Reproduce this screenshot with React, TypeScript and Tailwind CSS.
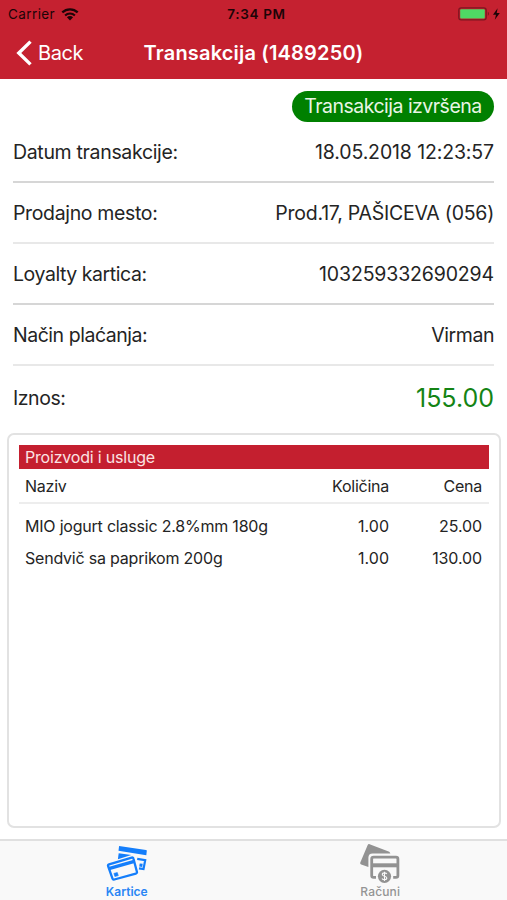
import type { ReactNode } from "react";

type Detail = {
  label: string;
  value: string;
  labelClass: string;
  valueClass: string;
  lineClass: string;
};

type Product = {
  name: string;
  quantity: string;
  price: string;
};

const details: Detail[] = [
  {
    label: "Datum transakcije:",
    value: "18.05.2018 12:23:57",
    labelClass: "tracking-[-0.33px]",
    valueClass: "tracking-[-0.13px]",
    lineClass: "border-[#d6d6d6]",
  },
  {
    label: "Prodajno mesto:",
    value: "Prod.17, PAŠICEVA (056)",
    labelClass: "tracking-[-0.35px]",
    valueClass: "tracking-[-0.25px]",
    lineClass: "border-[#e8e8e8]",
  },
  {
    label: "Loyalty kartica:",
    value: "103259332690294",
    labelClass: "tracking-[-0.44px]",
    valueClass: "tracking-[-0.15px]",
    lineClass: "border-[#d6d6d6]",
  },
  {
    label: "Način plaćanja:",
    value: "Virman",
    labelClass: "tracking-[-0.47px]",
    valueClass: "tracking-[-0.45px]",
    lineClass: "border-[#e8e8e8]",
  },
];

const products: Product[] = [
  { name: "MIO jogurt classic 2.8%mm 180g", quantity: "1.00", price: "25.00" },
  { name: "Sendvič sa paprikom 200g", quantity: "1.00", price: "130.00" },
];

const WifiIcon = () => (
  <svg width="18" height="13" viewBox="0 0 18 13" fill="none" stroke="#1c0407">
    <path d="M1.3 4.4a11.2 11.2 0 0 1 15.4 0" strokeWidth="2.3" />
    <path d="M4.1 7.4a7.2 7.2 0 0 1 9.8 0" strokeWidth="2.1" />
    <path d="M9 12.6 5.9 9.3a4.6 4.6 0 0 1 6.2 0z" fill="#1c0407" stroke="none" />
  </svg>
);

const BatteryIcon = () => (
  <svg width="44" height="14" viewBox="0 0 44 14">
    <rect x="0.8" y="0.8" width="27.4" height="12" rx="2.4" fill="none" stroke="#7d1620" strokeWidth="1.3" />
    <rect x="2.2" y="2.2" width="24.6" height="9.2" rx="1" fill="#4fd964" />
    <path d="M29.8 4.8c1.6.5 1.6 3.5 0 4z" fill="#7d1620" />
    <path d="M39.6 1.2 35 7.7h3l-1.2 5.1 5-6.9h-3.1z" fill="#1c0407" />
  </svg>
);

const CardsIcon = () => (
  <svg width="42" height="38" viewBox="0 0 42 38" fill="none" stroke="#147efb">
    <path d="m13.1 1 26.9 4.1c.6.1.9.5.8 1l-.5 4.2-27.8-4.6z" fill="#147efb" stroke="none" />
    <path d="m12.7 8.2 12.6 1.8-13.4 4.2z" fill="#147efb" stroke="none" />
    <path d="m31.2 13.8 8 1.3-1.7 9-4.5-.7" strokeWidth="2.2" />
    <path d="m33.7 18.4 3 .4-.5 3.1-3-.4z" fill="#147efb" stroke="none" />
    <path d="m3.1 19.4 22.6-6.8c1-.3 1.6.1 1.8 1.1l3.4 13c.3 1-.1 1.6-1.1 1.9L8.3 34.5c-1 .3-1.6-.1-1.9-1.1L2.1 21.1c-.3-.9.1-1.4 1-1.7z" strokeWidth="2.3" />
    <path d="m2.8 23.6 25.5-7.2" strokeWidth="3.4" />
    <path d="m7.9 28.4 3.4-.9 1 3.1-3.4.9z" fill="#147efb" strokeWidth="0.6" />
  </svg>
);

const BillsIcon = () => (
  <svg width="42" height="40" viewBox="0 0 42 40" fill="none" stroke="#929292">
    <path d="m10.6.2 19 7.2c.9.3 1.5 1.1 1.8 2.1H13.6c-2.8 0-4.2 1.5-4.2 4.2V23l-7.2-2.6c-.9-.3-1.2-.9-.9-1.8L8.7 1c.4-.9 1-1.2 1.9-.8z" fill="#929292" stroke="none" />
    <path d="M17 33.4h-2.4c-1.2 0-1.9-.7-1.9-1.9V15c0-1.2.7-1.9 1.9-1.9h22.4c1.2 0 1.9.7 1.9 1.9v16.5c0 1.2-.7 1.9-1.9 1.9h-2.8" strokeWidth="2.8" />
    <path d="M12.7 21.3h26" strokeWidth="4" />
    <circle cx="25.5" cy="32.3" r="6.6" fill="#929292" stroke="none" />
    <path d="M27.8 30c-.5-.8-1.3-1.1-2.3-1.1-1.3 0-2.2.6-2.2 1.6 0 2.3 4.5 1.1 4.5 3.5 0 1-.9 1.7-2.3 1.7-1.1 0-2-.4-2.5-1.3M25.5 27.7v9.2" stroke="#f9f9f9" strokeWidth="1.1" />
  </svg>
);

const Tab = ({ label, className, children }: { label: string; className: string; children: ReactNode }) => (
  <div className={`flex flex-1 flex-col items-center text-[12px] leading-[14px] ${className}`}>
    {children}
    <span>{label}</span>
  </div>
);

export default function App() {
  return (
    <div className="flex h-[900px] w-[507px] flex-col overflow-hidden bg-white font-['Inter',sans-serif] text-[#242424]">
      <header className="h-[79px] shrink-0 bg-[#c52130]">
        <div className="grid h-[28px] grid-cols-[1fr_auto_1fr] items-center pr-[5px] pl-[8px] text-[13.5px] text-[#1c0407]">
          <div className="flex items-center gap-[6px]">
            <span className="tracking-[0.4px]">Carrier</span>
            <WifiIcon />
          </div>
          <span className="pl-[3px] font-semibold tracking-[0.65px]">7:34 PM</span>
          <div className="flex justify-end">
            <BatteryIcon />
          </div>
        </div>
        <div className="grid h-[49px] grid-cols-[1fr_auto_1fr] items-center px-[16px] text-white">
          <div className="flex items-center gap-[6px]">
            <svg width="16" height="26" viewBox="0 0 16 26" fill="none" stroke="white" strokeWidth="3.4">
              <path d="M14.5 1.6 2.8 13l11.7 11.4" />
            </svg>
            <span className="text-[20px] tracking-[-0.4px]">Back</span>
          </div>
          <h1 className="text-[20px] font-semibold tracking-[0.18px]">Transakcija (1489250)</h1>
        </div>
      </header>

      <main className="flex flex-1 flex-col">
        <div className="flex justify-end pt-[12px] pr-[13px]">
          <span className="flex h-[31px] w-[202px] items-center justify-center rounded-full bg-[#008000] text-[19.5px] tracking-[-0.52px] text-[#e9f5e5]">
            Transakcija izvršena
          </span>
        </div>

        <div className="px-[13px] text-[19.5px]">
          {details.map((detail) => (
            <div
              key={detail.label}
              className={`flex h-[61px] items-center justify-between border-b-2 pt-[3px] ${detail.lineClass}`}
            >
              <span className={detail.labelClass}>{detail.label}</span>
              <span className={detail.valueClass}>{detail.value}</span>
            </div>
          ))}
          <div className="flex h-[67px] items-center justify-between pb-px">
            <span className="tracking-[-0.45px]">Iznos:</span>
            <span className="text-[25px] text-[#148414]">155.00</span>
          </div>
        </div>

        <section className="mr-[6px] ml-[7px] h-[395px] rounded-[7px] border-2 border-[#e2e2e2] px-[10px] pt-[10px] text-[16px]">
          <h2 className="flex h-[24px] items-center bg-[#c41f2f] pl-[6px] tracking-[-0.2px] text-[#fbe3e4]">
            Proizvodi i usluge
          </h2>
          <div className="grid h-[35px] grid-cols-[1fr_100px_93px] items-center border-b-2 border-[#ededed] pr-[7px] pl-[6px] tracking-[-0.25px]">
            <span>Naziv</span>
            <span className="text-right">Količina</span>
            <span className="text-right">Cena</span>
          </div>
          <div className="pt-[6px] pr-[7px] pl-[6px]">
            {products.map((product) => (
              <div key={product.name} className="grid h-[32px] grid-cols-[1fr_100px_93px] items-center">
                <span className="tracking-[-0.21px] whitespace-nowrap">{product.name}</span>
                <span className="text-right">{product.quantity}</span>
                <span className="text-right tracking-[-0.1px]">{product.price}</span>
              </div>
            ))}
          </div>
        </section>
      </main>

      <nav className="flex h-[61px] shrink-0 border-t-2 border-[#e0e0e0] bg-[#f9f9f9]">
        <Tab label="Kartice" className="pt-[4px] font-semibold text-[#2a86f5]">
          <div className="h-[40px]">
            <CardsIcon />
          </div>
        </Tab>
        <Tab label="Računi" className="pt-[3px] font-medium tracking-[0.15px] text-[#949494]">
          <div className="h-[41px]">
            <BillsIcon />
          </div>
        </Tab>
      </nav>
    </div>
  );
}
